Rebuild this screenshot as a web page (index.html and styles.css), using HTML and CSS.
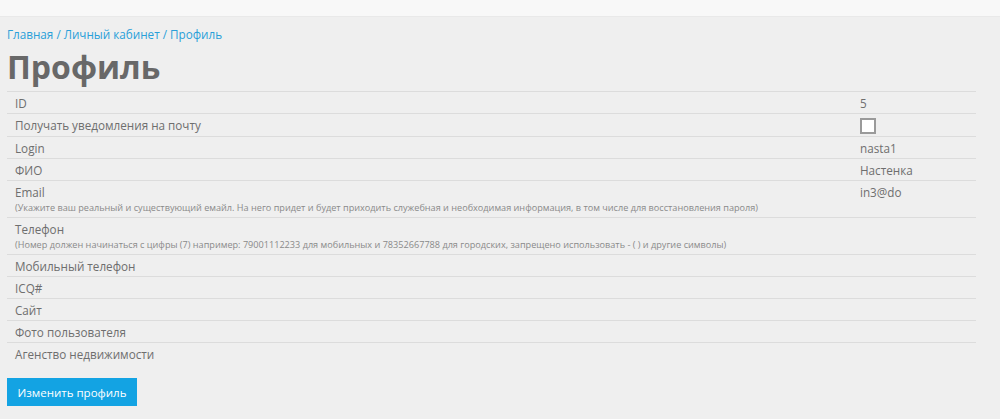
FILE: index.html
```html
<!DOCTYPE html>
<html lang="ru">
<head>
    <meta charset="UTF-8">
    <title>Профиль</title>
    <link rel="stylesheet" href="styles.css">
</head>
<body>
<div class="topbar"></div>
<div class="content">
    <div class="crumbs">
        <a href="#">Главная</a> / <a href="#">Личный кабинет</a> / <a href="#">Профиль</a>
    </div>
    <h1>Профиль</h1>
    <table class="profile">
        <tr><td>ID</td><td class="val">5</td></tr>
        <tr><td>Получать уведомления на почту</td><td class="val"><input type="checkbox" class="check"></td></tr>
        <tr><td>Login</td><td class="val">nasta1</td></tr>
        <tr><td>ФИО</td><td class="val">Настенка</td></tr>
        <tr><td>Email<div class="hint">(Укажите ваш реальный и существующий емайл. На него придет и будет приходить служебная и необходимая информация, в том числе для восстановления пароля)</div></td><td class="val">in3@do</td></tr>
        <tr><td>Телефон<div class="hint">(Номер должен начинаться с цифры (7) например: 79001112233 для мобильных и 78352667788 для городских, запрещено использовать - ( ) и другие символы)</div></td><td class="val"></td></tr>
        <tr><td>Мобильный телефон</td><td class="val"></td></tr>
        <tr><td>ICQ#</td><td class="val"></td></tr>
        <tr><td>Сайт</td><td class="val"></td></tr>
        <tr><td>Фото пользователя</td><td class="val"></td></tr>
        <tr><td>Агенство недвижимости</td><td class="val"></td></tr>
    </table>
    <button type="button" class="btn">Изменить профиль</button>
</div>
</body>
</html>
```

FILE: styles.css
```css
body {
    margin: 0;
    background: #efefef;
    font-family: "Open Sans", Arial, sans-serif;
    color: #6e6e6e;
    font-size: 11.7px;
}

.topbar {
    height: 16px;
    background: #f8f8f8;
    border-bottom: 1px solid #e9e9e9;
}

.content {
    padding: 9px 24px 0 7px;
}

.crumbs {
    line-height: 16px;
    color: #2a9fd9;
}

.crumbs a {
    color: #2a9fd9;
    text-decoration: none;
}

h1 {
    margin: 2px 0 1px 0;
    font-size: 32px;
    line-height: 46px;
    font-weight: 700;
    color: #686868;
}

.profile {
    width: 100%;
    border-collapse: collapse;
}

.profile td {
    border-top: 1px solid #dcdcdc;
    padding: 3px 8px 2px 8px;
    line-height: 16px;
    vertical-align: top;
}

.profile td.val {
    width: 108px;
}

.hint {
    font-size: 9.15px;
    line-height: 12px;
    color: #8a8a8a;
    margin-top: 2px;
    padding-bottom: 1px;
}

.check {
    appearance: none;
    -webkit-appearance: none;
    width: 16px;
    height: 16px;
    margin: 1px 0 0 0;
    border: 2px solid #9a9a9a;
    background: #fff;
    display: block;
    box-sizing: border-box;
}

.btn {
    margin-top: 14px;
    width: 130px;
    height: 28px;
    border: none;
    background: #13a3e3;
    color: #fff;
    font-family: "Open Sans", Arial, sans-serif;
    font-size: 11.5px;
    padding: 0;
    cursor: pointer;
}
```
